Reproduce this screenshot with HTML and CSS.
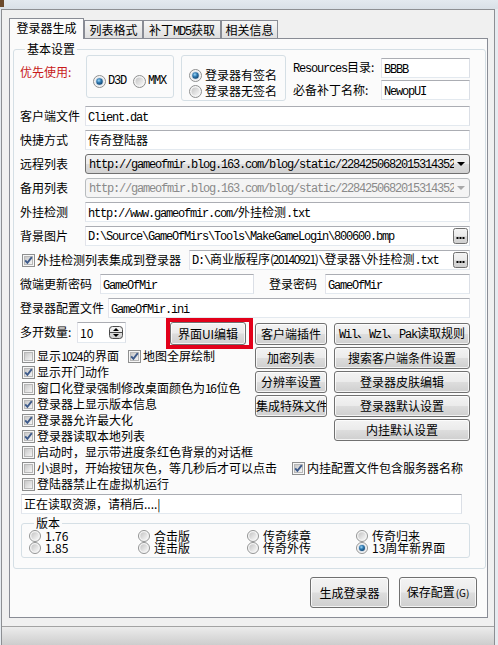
FILE: index.html
```html
<!DOCTYPE html>
<html>
<head>
<meta charset="utf-8">
<title>登录器生成</title>
<link rel="stylesheet" href="styles.css">
</head>
<body>
<svg class="defs" width="0" height="0" aria-hidden="true">
  <defs>
    <linearGradient id="gBox" x1="0" y1="0" x2="1" y2="1">
      <stop offset="0" stop-color="#c4c4c4"/>
      <stop offset="1" stop-color="#f8f8f8"/>
    </linearGradient>
    <linearGradient id="gBtn" x1="0" y1="0" x2="0" y2="1">
      <stop offset="0" stop-color="#f4f4f4"/>
      <stop offset="0.5" stop-color="#ebebeb"/>
      <stop offset="0.5" stop-color="#dcdcdc"/>
      <stop offset="1" stop-color="#cfcfcf"/>
    </linearGradient>
    <radialGradient id="gDot" cx="0.4" cy="0.35" r="0.75">
      <stop offset="0" stop-color="#9fd8f8"/>
      <stop offset="0.45" stop-color="#2d78b0"/>
      <stop offset="1" stop-color="#0d3a62"/>
    </radialGradient>
    <symbol id="cb0" viewBox="0 0 13 13">
      <rect x="0.5" y="0.5" width="12" height="12" fill="#f6f6f6" stroke="#8e8f8f"/>
      <rect x="2.5" y="2.5" width="8" height="8" fill="url(#gBox)" stroke="#b8b8b8"/>
    </symbol>
    <symbol id="cb1" viewBox="0 0 13 13">
      <rect x="0.5" y="0.5" width="12" height="12" fill="#f6f6f6" stroke="#8e8f8f"/>
      <rect x="2.5" y="2.5" width="8" height="8" fill="url(#gBox)" stroke="#b8b8b8"/>
      <path d="M3.2 6.4 L5.4 8.8 L9.8 3.2" fill="none" stroke="#3d5a8a" stroke-width="1.9"/>
    </symbol>
    <symbol id="rd0" viewBox="0 0 13 13">
      <circle cx="6.5" cy="6.5" r="6" fill="#f4f4f4" stroke="#8e8f8f"/>
      <circle cx="6.5" cy="6.5" r="4" fill="url(#gBox)"/>
    </symbol>
    <symbol id="rd1" viewBox="0 0 13 13">
      <circle cx="6.5" cy="6.5" r="6" fill="#f4f4f4" stroke="#8e8f8f"/>
      <circle cx="6.5" cy="6.5" r="4" fill="#c9d6e3"/>
      <circle cx="6.5" cy="6.5" r="3.2" fill="url(#gDot)"/>
    </symbol>
    <symbol id="ell" viewBox="0 0 15 16">
      <rect x="0.5" y="0.5" width="14" height="15" rx="2" fill="url(#gBtn)" stroke="#707070"/>
      <rect x="3.5" y="9" width="2" height="2" fill="#000"/>
      <rect x="6.5" y="9" width="2" height="2" fill="#000"/>
      <rect x="9.5" y="9" width="2" height="2" fill="#000"/>
    </symbol>
  </defs>
</svg>

<div class="chrome"><span class="appicon"></span></div>

<div class="win">
  <div class="client">
    <div class="tabs">
      <div class="tab active t1">登录器生成</div>
      <div class="tab t2">列表格式</div>
      <div class="tab t3">补丁<span class="m">MD5</span>获取</div>
      <div class="tab t4">相关信息</div>
    </div>

    <div class="page">
      <fieldset class="grp main">
        <legend>基本设置</legend>

        <div class="row1">
          <span class="lbl red">优先使用:</span>
          <div class="pbox p1">
            <label class="opt"><svg class="rd"><use href="#rd1"/></svg><span class="m">D3D</span></label>
            <label class="opt mmx"><svg class="rd"><use href="#rd0"/></svg><span class="m">MMX</span></label>
          </div>
          <div class="pbox p2">
            <label class="opt row"><svg class="rd"><use href="#rd1"/></svg>登录器有签名</label>
            <label class="opt row"><svg class="rd"><use href="#rd0"/></svg>登录器无签名</label>
          </div>
          <div class="res">
            <span class="lbl"><span class="m">Resources</span>目录:</span>
            <div class="edit"><span class="m">BBBB</span></div>
            <span class="lbl">必备补丁名称:</span>
            <div class="edit"><span class="m">NewopUI</span></div>
          </div>
        </div>

        <div class="frow first">
          <span class="lbl w65">客户端文件</span>
          <div class="edit grow"><span class="m">Client.dat</span></div>
        </div>
        <div class="frow">
          <span class="lbl w65">快捷方式</span>
          <div class="edit grow">传奇登陆器</div>
        </div>
        <div class="frow">
          <span class="lbl w65">远程列表</span>
          <div class="combo grow">
            <span class="ctext"><span class="m">http://gameofmir.blog.163.com/blog/static/2284250682015314352</span></span>
            <svg class="carr" width="8" height="4" viewBox="0 0 8 4"><path d="M0 0H8L4 4Z"/></svg>
          </div>
        </div>
        <div class="frow">
          <span class="lbl w65">备用列表</span>
          <div class="combo disabled grow">
            <span class="ctext"><span class="m">http://gameofmir.blog.163.com/blog/static/2284250682015314352</span></span>
            <svg class="carr" width="8" height="4" viewBox="0 0 8 4"><path d="M0 0H8L4 4Z"/></svg>
          </div>
        </div>
        <div class="frow">
          <span class="lbl w65">外挂检测</span>
          <div class="edit grow"><span class="m">http://www.gameofmir.com/</span>外挂检测<span class="m">.txt</span></div>
        </div>
        <div class="frow">
          <span class="lbl w65">背景图片</span>
          <div class="edit grow withbtn">
            <span class="etext"><span class="m">D:\Source\GameOfMirs\Tools\MakeGameLogin\800600.bmp</span></span>
            <svg class="ellbtn"><use href="#ell"/></svg>
          </div>
        </div>
        <div class="frow">
          <label class="chk w169"><svg><use href="#cb1"/></svg>外挂检测列表集成到登录器</label>
          <div class="edit grow withbtn">
            <span class="etext"><span class="m">D:\</span>商业版程序<span class="dg">(20140921)</span><span class="m">\</span>登录器<span class="m">\</span>外挂检测<span class="m">.txt</span></span>
            <svg class="ellbtn"><use href="#ell"/></svg>
          </div>
        </div>
        <div class="frow">
          <span class="lbl w80">微端更新密码</span>
          <div class="edit w154"><span class="m">GameOfMir</span></div>
          <span class="lbl pwlbl">登录密码</span>
          <div class="edit grow"><span class="m">GameOfMir</span></div>
        </div>
        <div class="frow">
          <span class="lbl w88">登录器配置文件</span>
          <div class="edit grow"><span class="m">GameOfMir.ini</span></div>
        </div>

        <div class="lower">
          <div class="lcol">
            <div class="multi">
              <span class="lbl mlbl">多开数量:</span>
              <div class="edit spin">
                <span>10</span>
                <svg class="spinbtn" width="14" height="13" viewBox="0 0 14 13">
                  <rect x="0.5" y="0.5" width="13" height="12" rx="3" fill="url(#gBtn)" stroke="#4a4a4a"/>
                  <line x1="1" y1="6.5" x2="13" y2="6.5" stroke="#4a4a4a"/>
                  <path d="M4 5 L7 2 L10 5Z" fill="#000"/>
                  <path d="M4 8 L7 11 L10 8Z" fill="#000"/>
                </svg>
              </div>
              <div class="hl"><button class="btn uibtn">界面UI编辑</button></div>
            </div>
            <div class="chkrow">
              <label class="chk w106"><svg><use href="#cb0"/></svg>显示<span class="dg">1024</span>的界面</label>
              <label class="chk"><svg><use href="#cb1"/></svg>地图全屏绘制</label>
            </div>
            <label class="chk"><svg><use href="#cb1"/></svg>显示开门动作</label>
            <label class="chk"><svg><use href="#cb0"/></svg>窗口化登录强制修改桌面颜色为<span class="dg">16</span>位色</label>
            <label class="chk"><svg><use href="#cb1"/></svg>登录器上显示版本信息</label>
            <label class="chk"><svg><use href="#cb1"/></svg>登录器允许最大化</label>
            <label class="chk"><svg><use href="#cb1"/></svg>登录器读取本地列表</label>
          </div>
          <div class="bgrid">
            <button class="btn">客户端插件</button>
            <button class="btn"><span class="m">Wil</span>、<span class="m">Wzl</span>、<span class="m">Pak</span>读取规则</button>
            <button class="btn">加密列表</button>
            <button class="btn">搜索客户端条件设置</button>
            <button class="btn">分辨率设置</button>
            <button class="btn">登录器皮肤编辑</button>
            <button class="btn">集成特殊文件</button>
            <button class="btn">登录器默认设置</button>
            <button class="btn colb">内挂默认设置</button>
          </div>
        </div>

        <label class="chk"><svg><use href="#cb0"/></svg>启动时，显示带进度条红色背景的对话框</label>
        <div class="chkrow">
          <label class="chk w270"><svg><use href="#cb0"/></svg>小退时，开始按钮灰色，等几秒后才可以点击</label>
          <label class="chk"><svg><use href="#cb1"/></svg>内挂配置文件包含服务器名称</label>
        </div>
        <label class="chk"><svg><use href="#cb0"/></svg>登陆器禁止在虚拟机运行</label>

        <div class="edit status">正在读取资源，请稍后....|</div>

        <fieldset class="grp ver">
          <legend>版本</legend>
          <div class="vgrid">
            <label class="vopt"><svg><use href="#rd0"/></svg>1.76</label>
            <label class="vopt"><svg><use href="#rd0"/></svg>合击版</label>
            <label class="vopt"><svg><use href="#rd0"/></svg>传奇续章</label>
            <label class="vopt"><svg><use href="#rd0"/></svg>传奇归来</label>
            <label class="vopt"><svg><use href="#rd0"/></svg>1.85</label>
            <label class="vopt"><svg><use href="#rd0"/></svg>连击版</label>
            <label class="vopt"><svg><use href="#rd0"/></svg>传奇外传</label>
            <label class="vopt"><svg><use href="#rd1"/></svg>13周年新界面</label>
          </div>
        </fieldset>
      </fieldset>

      <div class="actions">
        <button class="btn big b1">生成登录器</button>
        <button class="btn big b2">保存配置<span class="g">(G)</span></button>
      </div>
    </div>
  </div>
  <div class="statusbar"></div>
</div>
</body>
</html>
```

FILE: styles.css
```css
html, body {
  margin: 0;
  padding: 0;
}

body {
  width: 498px;
  height: 645px;
  overflow: hidden;
  background: #e6ebf0;
  font-family: "Noto Sans CJK SC", "Liberation Sans", sans-serif;
  font-size: 12px;
  line-height: 14px;
  color: #000;
}

.defs {
  position: absolute;
  width: 0;
  height: 0;
  overflow: hidden;
}

.m {
  font-family: "Liberation Mono", "Noto Sans CJK SC", monospace;
  letter-spacing: -1.2px;
}

.dg {
  letter-spacing: -1.4px;
  margin-right: 1px;
}

/* window chrome */
.chrome {
  height: 9px;
  display: flex;
  background: linear-gradient(#e3e9ef, #d9e0e7);
}

.appicon {
  width: 4px;
  height: 7px;
  background: #6b4a2c;
}

.win {
  margin-left: 1px;
  width: 494px;
  height: 636px;
  box-sizing: border-box;
  border: 1px solid #8d8f93;
  border-bottom: none;
  background: #f0f0f0;
  display: flex;
  flex-direction: column;
}

.client {
  padding: 8px 0 0 7px;
}

/* tabs */
.tabs {
  display: flex;
  align-items: flex-end;
  height: 20px;
}

.tab {
  box-sizing: border-box;
  height: 18px;
  border: 1px solid #898c95;
  border-bottom: none;
  background: linear-gradient(#f6f6f6, #dfdfdf);
  text-align: center;
  line-height: 17px;
  white-space: nowrap;
}

.tab.active {
  height: 21px;
  margin-bottom: -1px;
  background: #fbfbfb;
  position: relative;
  z-index: 1;
  line-height: 18px;
}

.t1 { width: 75px; }
.t2 { width: 59px; }
.t3 { width: 78px; }
.t4 { width: 57px; }

.page {
  box-sizing: border-box;
  width: 479px;
  height: 580px;
  border: 1px solid #898c95;
  background: #fbfbfb;
  padding: 3px 0 0 3px;
}

/* group boxes */
.grp {
  margin: 0;
  border: 1px solid #d5dfe5;
  border-radius: 3px;
  min-width: 0;
  box-sizing: border-box;
}

.grp legend {
  padding: 0 2px;
  margin-left: 5px;
  line-height: 14px;
}

.main {
  width: 473px;
  padding: 0 15px 10px 6px;
}

.lbl {
  white-space: nowrap;
  flex: none;
}

.red {
  color: #c81a1a;
  width: 66px;
  margin-top: 10px;
}

/* first row */
.row1 {
  display: flex;
  align-items: flex-start;
  height: 46px;
  margin-top: -1px;
}

.pbox {
  box-sizing: border-box;
  border: 1px solid #d5dfe5;
  border-radius: 3px;
  flex: none;
}

.p1 {
  width: 88px;
  height: 43px;
  padding: 18px 0 0 6px;
  display: flex;
  align-items: flex-start;
}

.p2 {
  width: 105px;
  height: 46px;
  margin-left: 7px;
  padding: 11px 0 0 7px;
}

.opt {
  display: flex;
  align-items: center;
  height: 14px;
  white-space: nowrap;
}

.opt.row {
  height: 16px;
}

.opt .rd {
  width: 13px;
  height: 13px;
  margin-right: 2px;
  flex: none;
}

.opt.row .rd {
  margin-right: 3px;
}

.mmx {
  margin-left: 7px;
}

.res {
  margin-left: 7px;
  margin-top: 3px;
  display: grid;
  grid-template-columns: 88px 89px;
  grid-auto-rows: 20px;
  row-gap: 2px;
  align-items: center;
}

/* edit boxes */
.frow {
  display: flex;
  align-items: center;
  height: 20px;
  margin-top: 4px;
}

.frow.first {
  margin-top: 5px;
}

.w65 { width: 65px; }
.w80 { width: 80px; }
.w88 { width: 88px; }
.w154 { width: 154px; flex: none; }

.pwlbl {
  margin-left: 15px;
  width: 56px;
}

.edit {
  box-sizing: border-box;
  height: 20px;
  border: 1px solid;
  border-color: #abadb3 #dbdfe6 #e3e9ef #e2e3ea;
  background: #fff;
  padding: 0 2px;
  line-height: 18px;
  white-space: nowrap;
  overflow: hidden;
}

.grow {
  flex: 1;
  min-width: 0;
}

.withbtn {
  display: flex;
  align-items: center;
  padding-right: 1px;
}

.etext {
  flex: 1;
  min-width: 0;
  overflow: hidden;
  white-space: nowrap;
}

.ellbtn {
  width: 15px;
  height: 16px;
  flex: none;
}

.combo {
  box-sizing: border-box;
  height: 20px;
  display: flex;
  align-items: center;
  border: 1px solid #707070;
  border-radius: 3px;
  background: linear-gradient(#f3f3f3 0%, #ececec 50%, #dddddd 51%, #d2d2d2 100%);
  padding: 0 4px 0 3px;
  line-height: 18px;
}

.ctext {
  flex: 1;
  min-width: 0;
  overflow: hidden;
  white-space: nowrap;
  margin-right: 3px;
}

.carr {
  flex: none;
  fill: #000;
}

.combo.disabled {
  border-color: #b8bcbf;
  background: #f4f4f4;
  color: #8a8a8a;
}

.combo.disabled .carr {
  fill: #a8a8a8;
}

/* checkboxes */
.chk {
  display: flex;
  align-items: center;
  height: 16px;
  white-space: nowrap;
  flex: none;
}

.chk svg {
  width: 13px;
  height: 13px;
  margin: 0 2px;
  flex: none;
}

.chkrow {
  display: flex;
}

.w106 { width: 106px; }
.w169 { width: 169px; }
.w270 { width: 270px; }

/* lower area */
.lower {
  display: flex;
  height: 126px;
}

.lcol {
  width: 235px;
  flex: none;
}

.multi {
  display: flex;
  align-items: flex-start;
  height: 30px;
}

.mlbl {
  width: 57px;
  margin-top: 7px;
}

.spin {
  width: 49px;
  height: 21px;
  margin-top: 4px;
  display: flex;
  align-items: center;
  justify-content: space-between;
  padding: 0 2px 0 2px;
  flex: none;
}

.spinbtn {
  flex: none;
}

.hl {
  margin-left: 40px;
  width: 87px;
  height: 31px;
  box-sizing: border-box;
  border: 4px solid #e2001a;
  flex: none;
}

.btn {
  box-sizing: border-box;
  border: 1px solid #707070;
  border-radius: 3px;
  background: linear-gradient(#f3f3f3 0%, #ebebeb 48%, #dddddd 52%, #cfcfcf 100%);
  box-shadow: inset 0 0 0 1px rgba(255, 255, 255, 0.75);
  font: inherit;
  line-height: 18px;
  color: #000;
  padding: 0;
  white-space: nowrap;
  overflow: hidden;
}

.uibtn {
  width: 76px;
  height: 23px;
  display: block;
}

.bgrid {
  display: grid;
  grid-template-columns: 72px 136px;
  column-gap: 7px;
  grid-auto-rows: 22px;
  row-gap: 2px;
  margin-top: 5px;
}

.colb {
  grid-column: 2;
}

.status {
  margin: 2px 0 0 1px;
  width: 441px;
}

.ver {
  margin: 2px 0 0 1px;
  width: 449px;
  padding: 0 0 3px 7px;
}

.vgrid {
  display: grid;
  grid-template-columns: repeat(4, 109px);
  grid-auto-rows: 12px;
}

.vopt {
  display: flex;
  align-items: center;
  height: 12px;
  line-height: 12px;
  font-size: 12px;
  white-space: nowrap;
  overflow: visible;
}

.vopt svg {
  width: 12px;
  height: 12px;
  margin-right: 4px;
  flex: none;
}

.actions {
  display: flex;
  justify-content: flex-end;
  gap: 10px;
  margin-top: 8px;
  padding-right: 10px;
}

.big {
  height: 31px;
}

.b1 { width: 79px; }
.b2 { width: 78px; }

.g {
  font-size: 10px;
  margin-left: 1px;
}

.statusbar {
  margin-top: 8px;
  height: 19px;
  border-top: 1px solid #a3a3a3;
  background: linear-gradient(#ececec, #cdcdcd);
}
```
